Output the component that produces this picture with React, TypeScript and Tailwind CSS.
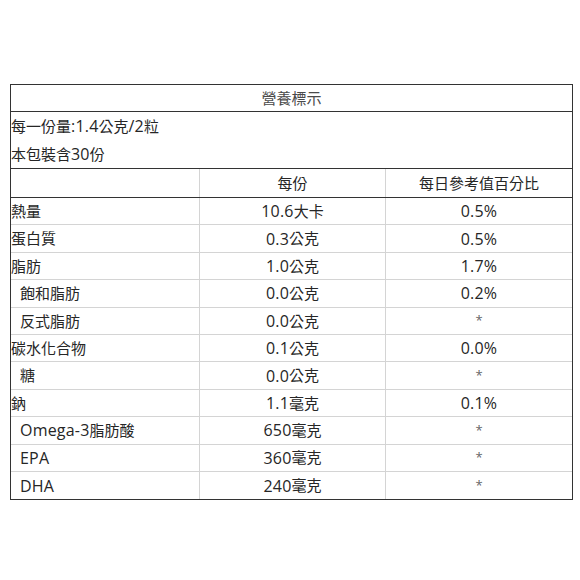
import React from "react";

const rows: { name: string; indent?: boolean; per: string; pct: string }[] = [
  { name: "熱量", per: "10.6大卡", pct: "0.5%" },
  { name: "蛋白質", per: "0.3公克", pct: "0.5%" },
  { name: "脂肪", per: "1.0公克", pct: "1.7%" },
  { name: "飽和脂肪", indent: true, per: "0.0公克", pct: "0.2%" },
  { name: "反式脂肪", indent: true, per: "0.0公克", pct: "*" },
  { name: "碳水化合物", per: "0.1公克", pct: "0.0%" },
  { name: "糖", indent: true, per: "0.0公克", pct: "*" },
  { name: "鈉", per: "1.1毫克", pct: "0.1%" },
  { name: "Omega-3脂肪酸", indent: true, per: "650毫克", pct: "*" },
  { name: "EPA", indent: true, per: "360毫克", pct: "*" },
  { name: "DHA", indent: true, per: "240毫克", pct: "*" },
];

function T({ s }: { s: string }) {
  if (s === "*") {
    return <span className="text-[13px] text-[#666]">*</span>;
  }
  const parts = s.match(/[\x00-\x7f]+|[^\x00-\x7f]+/g) || [];
  return (
    <>
      {parts.map((p, i) =>
        /^[\x00-\x7f]+$/.test(p) ? (
          <span key={i} className="text-[16px] tracking-[0.2px]">{p}</span>
        ) : (
          <span key={i}>{p}</span>
        )
      )}
    </>
  );
}

export default function App() {
  return (
    <div
      className="w-[580px] h-[580px] bg-white pt-[84px] pl-[10px] text-[#262626] text-[15px]"
      style={{ fontFamily: '"Open Sans", "Noto Sans CJK TC", sans-serif' }}
    >
      <div className="w-[563px] border-[1.5px] border-[#333]">
        <div className="h-[27px] flex items-center justify-center border-b-[1.5px] border-[#333] text-[15px] text-[#4a4a4a]">
          營養標示
        </div>
        <div className="border-b-[1.5px] border-[#333]">
          <div className="h-[28px] flex items-center"><T s="每一份量:1.4公克/2粒" /></div>
          <div className="h-[28px] flex items-center"><T s="本包裝含30份" /></div>
        </div>
        <div className="grid grid-cols-[188px_186px_1fr] h-[29px] border-b-[1.5px] border-[#333]">
          <div />
          <div className="border-l border-[#d4d4d4] flex items-center justify-center">每份</div>
          <div className="border-l border-[#d4d4d4] flex items-center justify-center">每日參考值百分比</div>
        </div>
        {rows.map((r, i) => (
          <div
            key={r.name}
            className={
              "grid grid-cols-[188px_186px_1fr] h-[27.4px] " +
              (i < rows.length - 1 ? "border-b border-[#d4d4d4]" : "")
            }
          >
            <div className={"flex items-center " + (r.indent ? "pl-[9px]" : "")}><T s={r.name} /></div>
            <div className="border-l border-[#d4d4d4] flex items-center justify-center"><T s={r.per} /></div>
            <div className="border-l border-[#d4d4d4] flex items-center justify-center"><T s={r.pct} /></div>
          </div>
        ))}
      </div>
    </div>
  );
}
